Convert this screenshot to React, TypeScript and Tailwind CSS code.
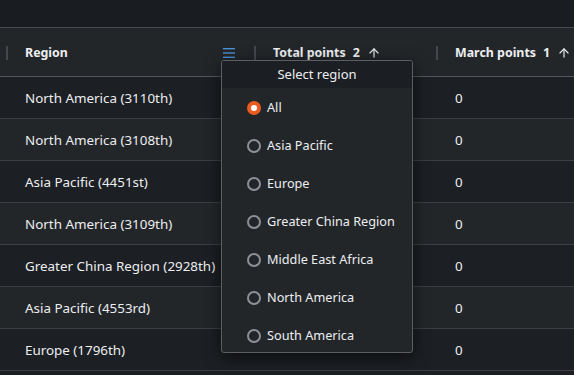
import { ArrowUp } from 'lucide-react';

type Row = { region: string; march: string };

const rows: Row[] = [
  { region: 'North America (3110th)', march: '0' },
  { region: 'North America (3108th)', march: '0' },
  { region: 'Asia Pacific (4451st)', march: '0' },
  { region: 'North America (3109th)', march: '0' },
  { region: 'Greater China Region (2928th)', march: '0' },
  { region: 'Asia Pacific (4553rd)', march: '0' },
  { region: 'Europe (1796th)', march: '0' },
];

const options = [
  'All',
  'Asia Pacific',
  'Europe',
  'Greater China Region',
  'Middle East Africa',
  'North America',
  'South America',
];

function Separator() {
  return <div className="w-[2px] h-[14px] bg-[#44474c] shrink-0" />;
}

function FilterIcon() {
  return (
    <svg width="12" height="10" viewBox="0 0 12 10" className="shrink-0">
      <rect x="0" y="0" width="12" height="1.4" fill="#4b8fd6" />
      <rect x="0" y="4.3" width="12" height="1.4" fill="#4b8fd6" />
      <rect x="0" y="8.6" width="12" height="1.4" fill="#4b8fd6" />
    </svg>
  );
}

function Radio({ checked }: { checked: boolean }) {
  if (checked) {
    return (
      <span className="w-[14px] h-[14px] rounded-full bg-[#ec5b22] flex items-center justify-center shrink-0">
        <span className="w-[6px] h-[6px] rounded-full bg-white" />
      </span>
    );
  }
  return (
    <span className="w-[14px] h-[14px] rounded-full border-2 border-[#8e9095] bg-[#232629] shrink-0" />
  );
}

export default function App() {
  return (
    <div
      className="relative w-[574px] h-[375px] overflow-hidden bg-[#1b1e22] text-[#eceef1]"
      style={{ fontFamily: '"Noto Sans", "Open Sans", sans-serif' }}
    >
      <div className="h-[28px] bg-[#191c20] border-b border-[#45484c]" />

      {/* Header */}
      <div className="grid grid-cols-[254px_182px_1fr] h-[49px] pt-[2px] bg-[#232629] border-b border-[#55585c] text-[12.4px] font-bold whitespace-nowrap">
        <div className="flex items-center pl-[6px] pr-[19px]">
          <Separator />
          <span className="ml-[17px]">Region</span>
          <span className="ml-auto">
            <FilterIcon />
          </span>
        </div>
        <div className="flex items-center">
          <Separator />
          <span className="ml-[17px]">Total points</span>
          <span className="ml-[7px]">2</span>
          <ArrowUp size={14} strokeWidth={2} className="ml-[7px]" />
        </div>
        <div className="flex items-center">
          <Separator />
          <span className="ml-[17px]">March points</span>
          <span className="ml-[7px]">1</span>
          <ArrowUp size={14} strokeWidth={2} className="ml-[7px]" />
        </div>
      </div>

      {/* Rows */}
      <div className="text-[13.4px] whitespace-nowrap">
        {rows.map((row, i) => (
          <div
            key={i}
            className={`grid grid-cols-[254px_182px_1fr] h-[42px] items-center pt-[2px] border-b border-[#3b3e42] ${
              i % 2 === 1 ? 'bg-[#232629]' : 'bg-[#1c1f23]'
            }`}
          >
            <span className="pl-[25px]">{row.region}</span>
            <span />
            <span className="pl-[19px]">{row.march}</span>
          </div>
        ))}
      </div>

      {/* Dropdown */}
      <div className="absolute left-[221px] top-[60px] w-[192px] h-[293px] bg-[#232629] border border-[#5b5e63] rounded-[3px] shadow-[0_4px_16px_rgba(0,0,0,0.6)] overflow-hidden">
        <div className="h-[27px] bg-[#1b1e22] flex items-center justify-center text-[13px]">
          Select region
        </div>
        <div className="pt-[1px]">
          {options.map((opt, i) => (
            <div key={opt} className="h-[38px] flex items-center pl-[25px] gap-[6px] text-[12.7px]">
              <Radio checked={i === 0} />
              <span>{opt}</span>
            </div>
          ))}
        </div>
      </div>
    </div>
  );
}
